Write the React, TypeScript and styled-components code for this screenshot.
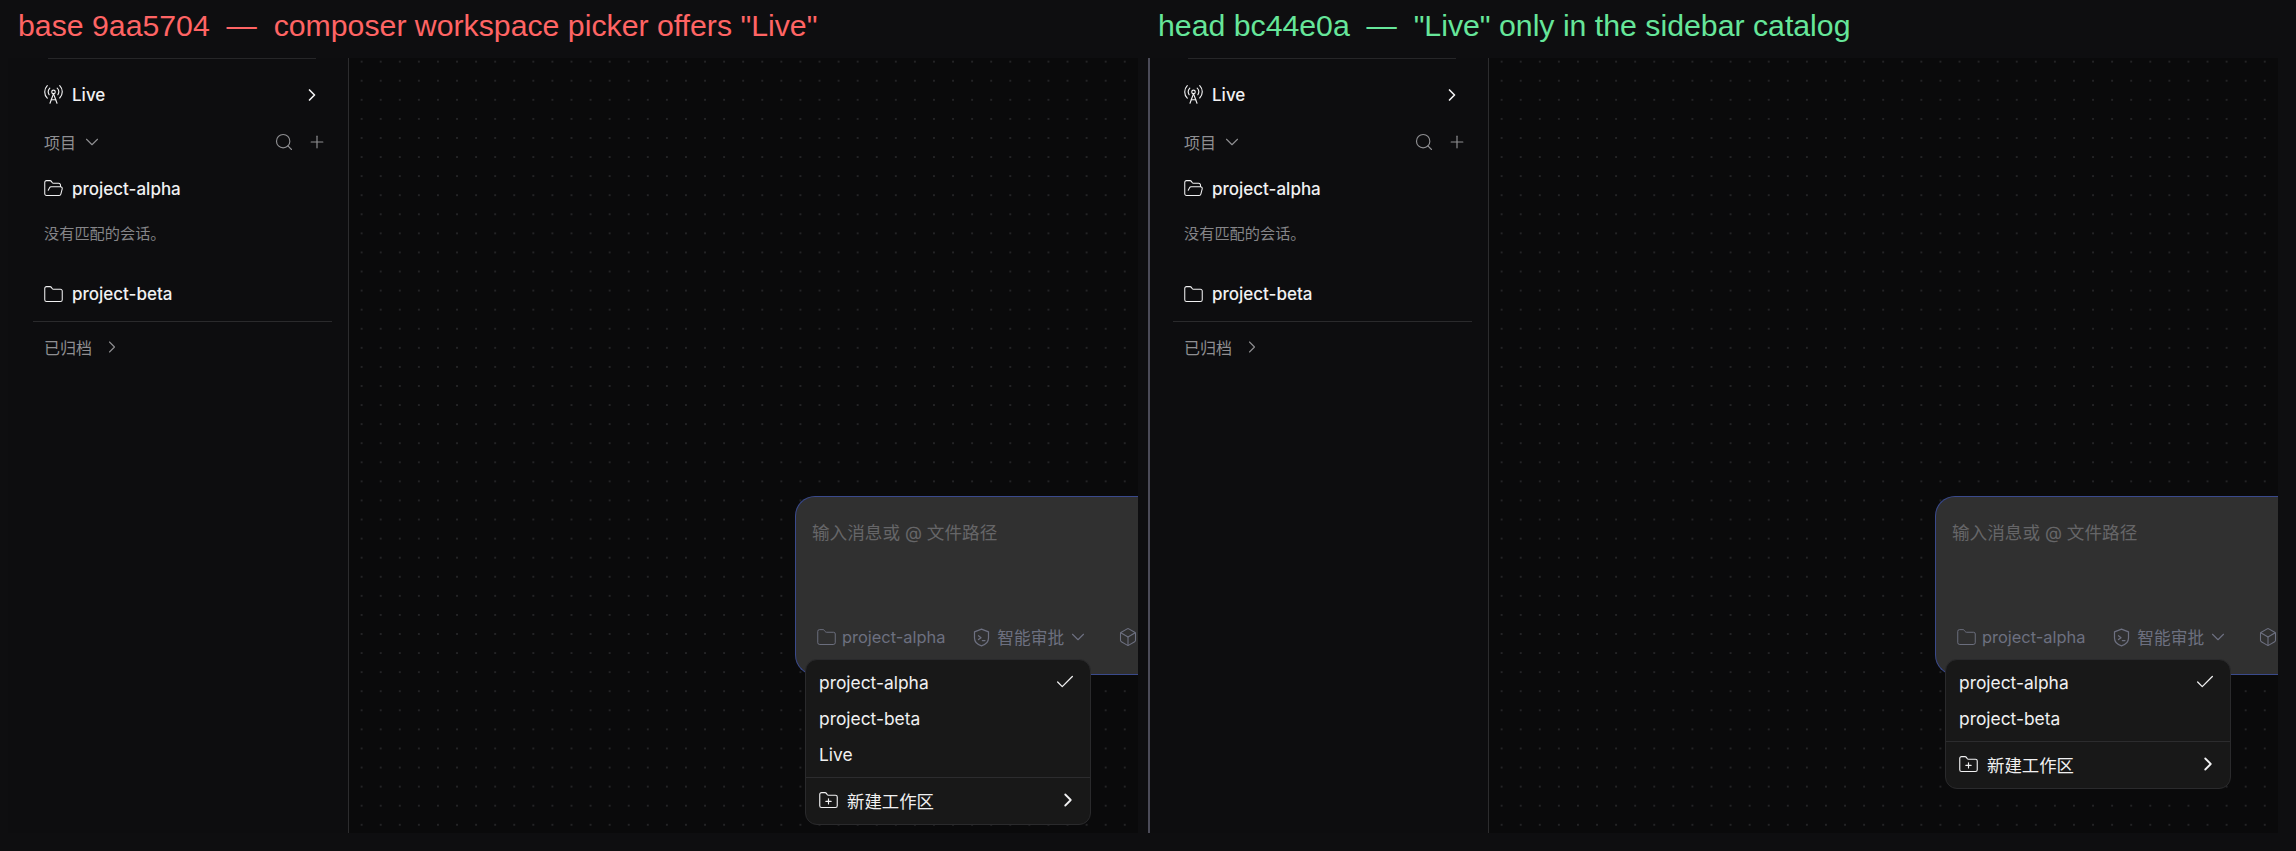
import styled, { createGlobalStyle } from "styled-components";
import { Box, Check, ChevronDown, ChevronRight, Folder, FolderOpen, FolderPlus, Plus, RadioTower, Search } from "lucide-react";

const GlobalStyle = createGlobalStyle`
  html, body {
    margin: 0;
    height: 100%;
    background: #0e0e10;
    overflow: hidden;
  }
  body {
    font-family: Inter, "Noto Sans CJK SC", sans-serif;
  }
`;

const Page = styled.div`
  display: grid;
  grid-template-columns: 1140px 1156px;
  width: 2296px;
  height: 851px;
`;

const Column = styled.div`
  display: flex;
  flex-direction: column;
  min-width: 0;
`;

const Caption = styled.div<{ $color: string }>`
  height: 58px;
  flex: none;
  padding-left: 18px;
  font-family: "Liberation Sans", Arial, sans-serif;
  font-size: 30.25px;
  line-height: 51px;
  white-space: pre;
  color: ${(p) => p.$color};
`;

const Shell = styled.div`
  display: flex;
  width: 1130px;
  height: 775px;
  margin-left: 8px;
`;

const Sidebar = styled.aside<{ $divider: boolean }>`
  width: 341px;
  flex: none;
  box-sizing: border-box;
  padding: 0 16px 0 25px;
  border-right: 1px solid #2c2c2e;
  background: #0d0d0f;
  box-shadow: ${(p) => (p.$divider ? "inset 2px 0 #4b4b58" : "none")};
`;

const TopRule = styled.div`
  height: 1px;
  margin: 0 16px 0 15px;
  background: #262628;
`;

const Row = styled.div<{ $height: number; $dim?: boolean }>`
  display: flex;
  align-items: center;
  height: ${(p) => p.$height}px;
  padding-left: 11px;
  font-size: ${(p) => (p.$dim ? 16 : 17)}px;
  font-weight: ${(p) => (p.$dim ? 400 : 450)};
  color: ${(p) => (p.$dim ? "#8f8f92" : "#f1f1f2")};
  svg {
    flex: none;
  }
`;

const LeadIcon = styled.span`
  display: inline-flex;
  margin: 0 8px 0 -1px;
`;

const TrailIcon = styled.span<{ $left?: number; $right?: number }>`
  display: inline-flex;
  margin-left: ${(p) => p.$left ?? 0}px;
  margin-right: ${(p) => p.$right ?? 0}px;
`;

const Push = styled.span`
  flex: 1;
`;

const Note = styled.div`
  height: 22px;
  margin-bottom: 30px;
  padding-left: 11px;
  font-size: 15.2px;
  line-height: 20px;
  color: #858588;
`;

const Rule = styled.div`
  height: 1px;
  margin-top: 9px;
  background: #2a2a2c;
`;

const IconButtons = styled.div`
  display: flex;
  align-items: center;
  gap: 13px;
  margin-right: 5px;
  color: #8f8f92;
`;

const Main = styled.main`
  flex: 1;
  min-width: 0;
  position: relative;
  overflow: hidden;
  padding: 438px 0 0 446px;
  background-color: #0a0a0b;
  background-image: radial-gradient(circle at center, #242426 1px, transparent 1px);
  background-size: 19.09px 19.09px;
  background-position: 3.1px -5.9px;
`;

const Composer = styled.div`
  width: 420px;
  height: 179px;
  box-sizing: border-box;
  padding: 24px 17px 0;
  border: 1px solid #3a4a8c;
  border-right: none;
  border-radius: 20px;
  background: #303030;
`;

const Placeholder = styled.div`
  height: 74px;
  margin-left: -1px;
  font-size: 17.6px;
  line-height: 24px;
  color: #666668;
`;

const ComposerBar = styled.div`
  display: flex;
  align-items: center;
  height: 24px;
  margin: 30px -17px 0 3px;
  font-size: 16.4px;
  color: #6d7080;
  white-space: nowrap;
`;

const BarItem = styled.span<{ $gap: number }>`
  display: inline-flex;
  align-items: center;
  gap: 5px;
  margin-right: ${(p) => p.$gap}px;
`;

const BarText = styled.span`
  font-size: 16.7px;
`;

const Menu = styled.div`
  position: absolute;
  top: 601px;
  left: 456px;
  width: 286px;
  box-sizing: border-box;
  padding: 5px 0;
  border: 1px solid #2a2a2c;
  border-radius: 12px;
  background: #181818;
  color: #f0f0f1;
`;

const MenuItem = styled.div`
  display: flex;
  align-items: center;
  height: 36px;
  box-sizing: border-box;
  padding: 0 14px 2px 13px;
  font-size: 17.4px;
  svg {
    flex: none;
  }
`;

const MenuRule = styled.div`
  height: 1px;
  margin: 4px 0 5px;
  background: #2c2c2e;
`;

const ShieldIcon = () => (
  <svg width="21" height="21" viewBox="0 0 24 24" fill="none" stroke="currentColor" strokeWidth="1.4" strokeLinecap="round" strokeLinejoin="round">
    <path d="M12 2.5 20 5.5v7c0 4.6-3.4 7.6-8 9-4.6-1.4-8-4.4-8-9v-7z" />
    <path d="m8.5 10 3 2.2-3 2.2" />
    <path d="M13 15.5h3" />
  </svg>
);

type PanelProps = {
  title: string;
  color: string;
  divider: boolean;
  workspaces: string[];
};

const Panel = ({ title, color, divider, workspaces }: PanelProps) => (
  <Column>
    <Caption $color={color}>{title}</Caption>
    <Shell>
      <Sidebar $divider={divider}>
        <TopRule />
        <Row $height={71}>
          <LeadIcon><RadioTower size={21} strokeWidth={1.3} /></LeadIcon>
          <span>Live</span>
          <Push />
          <TrailIcon $right={10}><ChevronRight size={20} /></TrailIcon>
        </Row>
        <Row $height={23} $dim>
          <span>项目</span>
          <TrailIcon $left={5}><ChevronDown size={22} strokeWidth={1.2} /></TrailIcon>
          <Push />
          <IconButtons>
            <Search size={20} strokeWidth={1.4} />
            <Plus size={20} strokeWidth={1.4} />
          </IconButtons>
        </Row>
        <Row $height={71}>
          <LeadIcon><FolderOpen size={21} strokeWidth={1.2} /></LeadIcon>
          <span>project-alpha</span>
        </Row>
        <Note>没有匹配的会话。</Note>
        <Row $height={36}>
          <LeadIcon><Folder size={21} strokeWidth={1.2} /></LeadIcon>
          <span>project-beta</span>
        </Row>
        <Rule />
        <Row $height={50} $dim>
          <span>已归档</span>
          <TrailIcon $left={10}><ChevronRight size={20} strokeWidth={1.3} /></TrailIcon>
        </Row>
      </Sidebar>
      <Main>
        <Composer>
          <Placeholder>输入消息或 @ 文件路径</Placeholder>
          <ComposerBar>
            <BarItem $gap={26}><Folder size={21} strokeWidth={1.1} />project-alpha</BarItem>
            <BarItem $gap={29}>
              <ShieldIcon />
              <BarText>智能审批</BarText>
              <TrailIcon $left={-2}><ChevronDown size={22} strokeWidth={1.2} /></TrailIcon>
            </BarItem>
            <Box size={20} strokeWidth={1.3} />
          </ComposerBar>
        </Composer>
        <Menu>
          {workspaces.map((name, i) => (
            <MenuItem key={name}>
              <span>{name}</span>
              <Push />
              {i === 0 && <Check size={22} strokeWidth={1.4} />}
            </MenuItem>
          ))}
          <MenuRule />
          <MenuItem>
            <LeadIcon><FolderPlus size={21} strokeWidth={1.3} /></LeadIcon>
            <span>新建工作区</span>
            <Push />
            <TrailIcon $right={-3}><ChevronRight size={22} /></TrailIcon>
          </MenuItem>
        </Menu>
      </Main>
    </Shell>
  </Column>
);

const App = () => (
  <>
    <GlobalStyle />
    <Page>
      <Panel
        title={'base 9aa5704  —  composer workspace picker offers "Live"'}
        color="#ff6464"
        divider={false}
        workspaces={["project-alpha", "project-beta", "Live"]}
      />
      <Panel
        title={'head bc44e0a  —  "Live" only in the sidebar catalog'}
        color="#66e69a"
        divider
        workspaces={["project-alpha", "project-beta"]}
      />
    </Page>
  </>
);

export default App;
